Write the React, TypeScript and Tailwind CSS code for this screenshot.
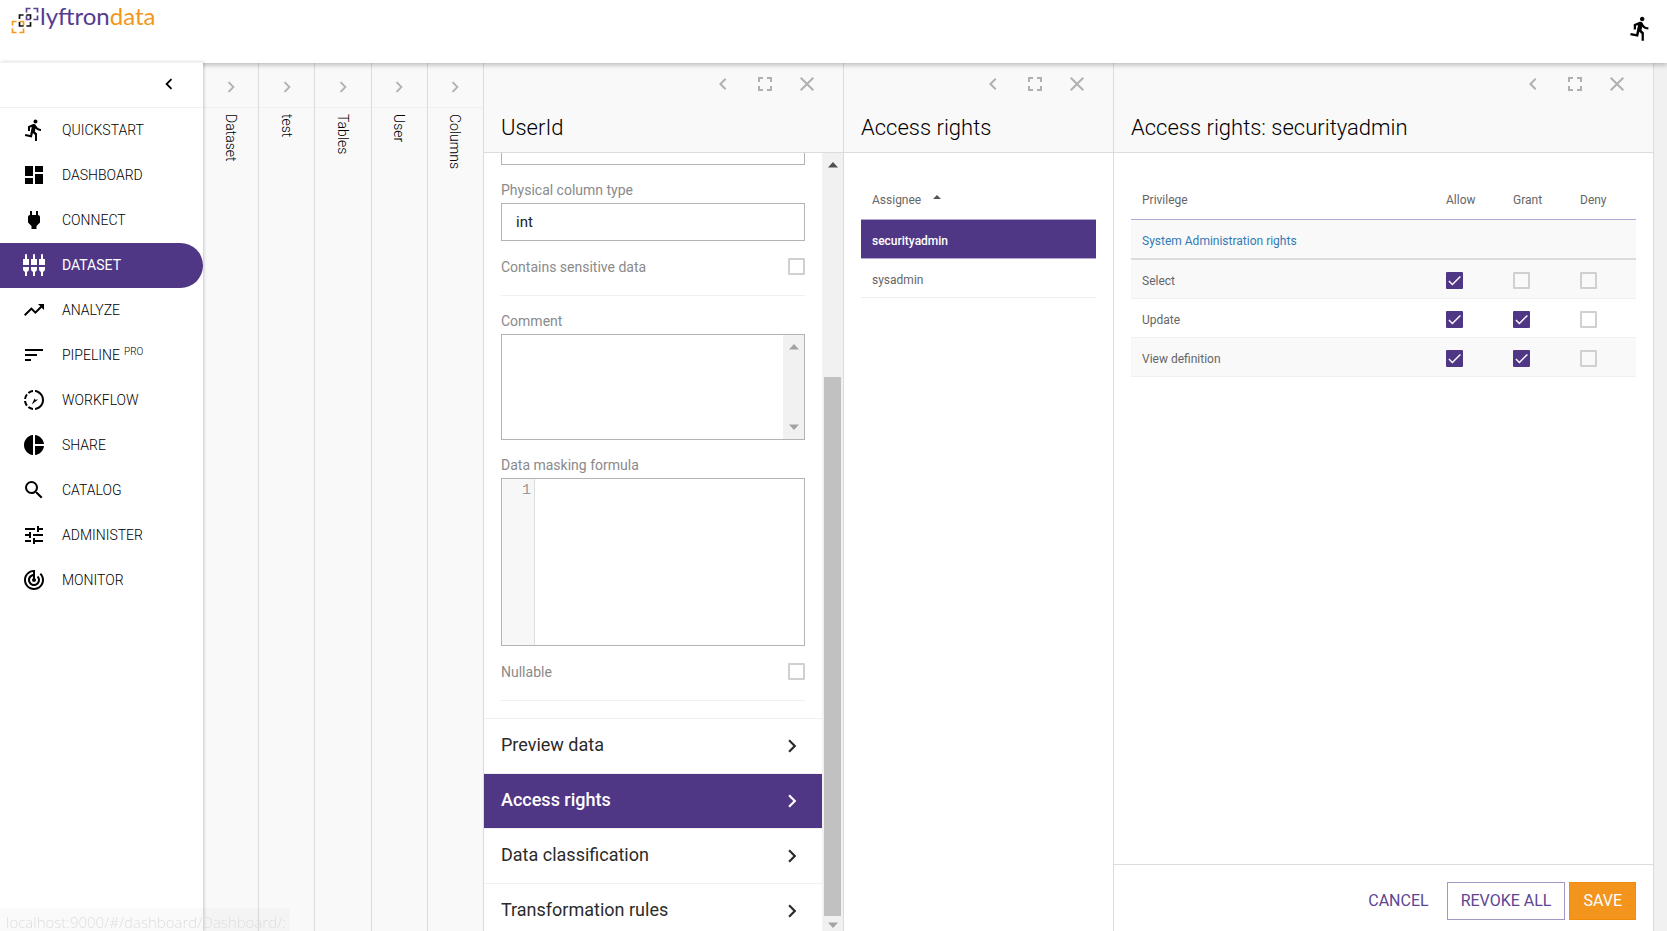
import { useState } from 'react';
import type { ReactNode } from 'react';
import {
    MdCheck,
    MdChevronLeft,
    MdChevronRight,
    MdClose,
    MdDashboard,
    MdDirectionsRun,
    MdFullscreen,
    MdPieChart,
    MdPower,
    MdSearch,
    MdSettingsInputComponent,
    MdSort,
    MdTrackChanges,
    MdTrendingUp,
    MdTune,
} from 'react-icons/md';

const WorkflowIcon = () => (
    <svg viewBox="0 0 24 24" className="w-6 h-6" fill="currentColor" aria-hidden="true">
        <path d="M11 4.07V2.05c-2.01.2-3.84 1-5.32 2.21L7.1 5.69A7.94 7.94 0 0 1 11 4.07zM5.69 7.1 4.26 5.68A9.95 9.95 0 0 0 2.05 11h2.02c.18-1.46.76-2.79 1.62-3.9zM4.07 13H2.05c.2 2.01 1 3.84 2.21 5.32l1.43-1.43A7.87 7.87 0 0 1 4.07 13zm1.61 6.74A9.98 9.98 0 0 0 11 21.95v-2.02a7.94 7.94 0 0 1-3.9-1.62l-1.42 1.43zM22 12c0 5.16-3.92 9.42-8.95 9.95v-2.02C16.97 19.41 20 16.05 20 12s-3.03-7.41-6.95-7.93V2.05C18.08 2.58 22 6.84 22 12z" />
        <path d="M9.800 16.500 12.500 10.500l.8 1.200 2.700-.2-2.400 2.100z" />
    </svg>
);

const navItems: { label: string; sup?: string; icon: ReactNode; active?: boolean }[] = [
    { label: 'QUICKSTART', icon: <MdDirectionsRun className="w-6 h-6" /> },
    { label: 'DASHBOARD', icon: <MdDashboard className="w-6 h-6" /> },
    { label: 'CONNECT', icon: <MdPower className="w-6 h-6" /> },
    { label: 'DATASET', icon: <MdSettingsInputComponent className="w-6 h-6" />, active: true },
    { label: 'ANALYZE', icon: <MdTrendingUp className="w-6 h-6" /> },
    { label: 'PIPELINE', sup: 'PRO', icon: <MdSort className="w-6 h-6" /> },
    { label: 'WORKFLOW', icon: <WorkflowIcon /> },
    { label: 'SHARE', icon: <MdPieChart className="w-6 h-6" /> },
    { label: 'CATALOG', icon: <MdSearch className="w-6 h-6" /> },
    { label: 'ADMINISTER', icon: <MdTune className="w-6 h-6" /> },
    { label: 'MONITOR', icon: <MdTrackChanges className="w-6 h-6" /> },
];

const strips = ['Dataset', 'test', 'Tables', 'User', 'Columns'];

const sections = ['Preview data', 'Access rights', 'Data classification', 'Transformation rules'];

const privileges = [
    { name: 'Select', rights: [true, false, false] },
    { name: 'Update', rights: [true, true, false] },
    { name: 'View definition', rights: [true, true, false] },
];

const rightNames = ['Allow', 'Grant', 'Deny'];

function Logo() {
    return (
        <a href="#" className="flex items-start gap-px" aria-label="lyftrondata">
            <svg width="28" height="27" viewBox="0 0 28 27" fill="none" strokeWidth="1.7" aria-hidden="true">
                <rect x="1.500" y="14.500" width="11" height="11" stroke="#f29a1f" strokeDasharray="8.2 2.8" strokeDashoffset="4.100" />
                <rect x="15.500" y="1.500" width="11" height="11" stroke="#5b4193" strokeDasharray="8.2 2.8" strokeDashoffset="4.100" />
                <rect x="8.500" y="8" width="11" height="11" stroke="#111" strokeDasharray="8.2 2.8" strokeDashoffset="4.100" />
            </svg>
            <span className="font-[Lato] text-2xl leading-[18px] text-[#553c8e]">
                lyftron<span className="text-[#f3961c]">data</span>
            </span>
        </a>
    );
}

function Checkbox({ label, defaultChecked }: { label: string; defaultChecked?: boolean }) {
    return (
        <span className="inline-grid">
            <input
                type="checkbox"
                aria-label={label}
                defaultChecked={defaultChecked}
                className="peer col-start-1 row-start-1 w-[17px] h-[17px] appearance-none rounded-[1px] border-2 border-[#d0d0d0] checked:border-[#503786] checked:bg-[#503786]"
            />
            <MdCheck className="col-start-1 row-start-1 w-[17px] h-[17px] text-white pointer-events-none invisible peer-checked:visible" />
        </span>
    );
}

function Panel({ title, className, children }: { title: string; className: string; children: ReactNode }) {
    return (
        <section className={'flex flex-col min-h-0 border-r border-[#dcdcdc] bg-white ' + className}>
            <header className="shrink-0 h-[90px] border-b border-[#dcdcdc] bg-[#f9f9f9] px-[17px]">
                <div className="flex justify-end gap-[18px] pt-[9px] pr-[7px] text-[#b0b0b0]">
                    <button aria-label="Collapse"><MdChevronLeft className="w-6 h-6" /></button>
                    <button aria-label="Full screen"><MdFullscreen className="w-6 h-6" /></button>
                    <button aria-label="Close"><MdClose className="w-6 h-6" /></button>
                </div>
                <h2 className="mt-4 text-[22px] leading-8 font-light text-black">{title}</h2>
            </header>
            {children}
        </section>
    );
}

const ArrowUp = ({ className }: { className?: string }) => (
    <svg width="10" height="6" viewBox="0 0 10 6" className={className} fill="currentColor" aria-hidden="true">
        <path d="M0 5.500 5 0l5 5.500z" />
    </svg>
);

const ArrowDown = ({ className }: { className?: string }) => (
    <svg width="10" height="6" viewBox="0 0 10 6" className={className} fill="currentColor" aria-hidden="true">
        <path d="M0 .5 5 6 10 .5z" />
    </svg>
);

function ColumnForm({ active, onSelect }: { active: string; onSelect: (s: string) => void }) {
    return (
        <div className="flex flex-1 min-h-0">
            <div className="flex-1 min-w-0 overflow-hidden">
                {/* the form is scrolled, so its first field is cut by the header */}
                <div className="-mt-[26px] px-[17px] pb-[17px] text-sm text-[#8a8a8a]">
                    <input aria-label="Column type" className="block w-full h-[38px] border border-[#b3b3b3]" />

                    <label htmlFor="physical" className="block mt-[15px] mb-[3px] leading-5">Physical column type</label>
                    <input id="physical" defaultValue="int" className="block w-full h-[38px] border border-[#b3b3b3] px-[14px] text-[15px] text-[#222]" />

                    <div className="flex items-center justify-between h-[55px] pb-[3px] border-b border-[#f0f0f0]">
                        <span>Contains sensitive data</span>
                        <Checkbox label="Contains sensitive data" />
                    </div>

                    <label htmlFor="comment" className="block mt-[15px] mb-[3px] leading-5">Comment</label>
                    <div className="flex h-[106px] border border-[#b3b3b3]">
                        <textarea id="comment" className="flex-1 resize-none px-3 py-2 text-[#222]" />
                        <div className="flex flex-col items-center justify-between w-[21px] py-[9px] bg-[#f1f1f1] text-[#a3a3a3]">
                            <ArrowUp />
                            <ArrowDown />
                        </div>
                    </div>

                    <label htmlFor="formula" className="block mt-[15px] mb-[3px] leading-5">Data masking formula</label>
                    <div className="flex h-[168px] border border-[#b3b3b3] font-['Liberation_Mono',monospace] text-[15px] leading-6">
                        <div className="w-[33px] border-r border-[#ddd] bg-[#f7f7f7] pr-[3px] text-right text-[#999]">1</div>
                        <textarea id="formula" className="flex-1 resize-none px-1 text-[#222]" />
                    </div>

                    <div className="flex items-center justify-between h-[55px] pb-[3px] border-b border-[#f0f0f0]">
                        <span>Nullable</span>
                        <Checkbox label="Nullable" />
                    </div>
                </div>

                {sections.map((s) => (
                    <button
                        key={s}
                        onClick={() => onSelect(s)}
                        className={
                            'flex items-center justify-between w-full h-[55px] border-t border-[#f0f0f0] px-[17px] pb-px text-lg ' +
                            (s === active ? 'bg-[#503786] font-medium text-white' : 'text-[#2b2b2b]')
                        }
                    >
                        <span className="pb-[2px]">{s}</span>
                        <MdChevronRight className="w-[26px] h-[26px]" />
                    </button>
                ))}
            </div>

            <div className="flex flex-col items-center w-[21px] shrink-0 bg-[#f1f1f1]">
                <ArrowUp className="mt-[9px] text-[#505050]" />
                <div className="mt-[209px] w-[17px] flex-1 bg-[#c1c1c1]" />
                <ArrowDown className="mt-[6px] mb-[3px] text-[#a3a3a3]" />
            </div>
        </div>
    );
}

export default function App() {
    const [section, setSection] = useState('Access rights');

    return (
        <div className="flex flex-col h-screen overflow-hidden bg-white font-[Roboto,sans-serif] text-black">
            <header className="relative z-10 flex justify-between shrink-0 h-[63px] bg-white pt-[7px] pl-[11px] pr-[13px] shadow-[0_2px_5px_rgba(0,0,0,0.26)]">
                <Logo />
                <button aria-label="Quickstart" className="self-start mt-2">
                    <MdDirectionsRun className="w-[27px] h-[27px]" />
                </button>
            </header>

            <div className="flex flex-1 min-h-0">
                <aside className="relative z-20 w-[203px] shrink-0 border-t border-[#f3f3f3] -mt-px bg-white shadow-[1px_0_3px_rgba(0,0,0,0.2)]">
                    <div className="flex items-center justify-end h-[45px] border-b border-[#f0f0f0] pr-[23px] pb-[2px]">
                        <button aria-label="Collapse menu"><MdChevronLeft className="w-[22px] h-[22px]" /></button>
                    </div>
                    <nav>
                        {navItems.map((item) => (
                            <a
                                key={item.label}
                                href="#"
                                className={
                                    'flex items-center gap-4 h-[45px] pl-[22px] pb-[2px] rounded-r-full text-sm ' +
                                    (item.active ? 'bg-[#503786] text-white' : 'font-light')
                                }
                            >
                                {item.icon}
                                <span>
                                    {item.label}
                                    {item.sup && <sup className="ml-1 text-[10px]">{item.sup}</sup>}
                                </span>
                            </a>
                        ))}
                    </nav>
                </aside>

                <div className="flex w-[281px] shrink-0">
                    {strips.map((name) => (
                        <div key={name} className="flex flex-col items-center flex-1 border-r border-[#dcdcdc] bg-[#f9f9f9]">
                            <button aria-label={'Expand ' + name} className="flex items-center justify-center w-full h-[45px] border-b border-[#f0f0f0] pt-[3px] text-[#b0b0b0]">
                                <MdChevronRight className="w-[22px] h-[22px]" />
                            </button>
                            <span className="mt-[6px] text-sm font-light [writing-mode:vertical-rl]">{name}</span>
                        </div>
                    ))}
                </div>

                <Panel title="UserId" className="w-[360px] shrink-0">
                    <ColumnForm active={section} onSelect={setSection} />
                </Panel>

                <Panel title="Access rights" className="w-[270px] shrink-0">
                    <div className="px-[17px] pt-7">
                        <table className="w-full border-separate border-spacing-0 text-left text-xs text-[#666]">
                            <thead>
                                <tr>
                                    <th className="h-[39px] border-b border-[#b3a8d0] px-[11px] font-normal">
                                        Assignee
                                        <svg width="8" height="4" viewBox="0 0 8 4" className="inline ml-3 mb-2" aria-hidden="true">
                                            <path d="M0 4 4 0l4 4z" fill="#555" />
                                        </svg>
                                    </th>
                                </tr>
                            </thead>
                            <tbody>
                                <tr>
                                    <td className="h-[39px] border-b border-[#b3a8d0] bg-[#503786] px-[11px] pt-[3px] font-medium text-white">securityadmin</td>
                                </tr>
                                <tr>
                                    <td className="h-[39px] border-b border-[#eee] px-[11px] pt-[3px]">sysadmin</td>
                                </tr>
                            </tbody>
                        </table>
                    </div>
                </Panel>

                <Panel title="Access rights: securityadmin" className="flex-1 min-w-0">
                    <div className="flex-1 px-[17px] pt-7">
                        <table className="w-full table-fixed border-separate border-spacing-0 text-left text-xs text-[#666]">
                            <thead>
                                <tr>
                                    <th className="h-[39px] border-b border-[#b3a8d0] px-[11px] font-normal">Privilege</th>
                                    {rightNames.map((r) => (
                                        <th key={r} className="w-[67px] border-b border-[#b3a8d0] pl-[11px] font-normal">{r}</th>
                                    ))}
                                </tr>
                            </thead>
                            <tbody>
                                <tr>
                                    <td colSpan={4} className="h-10 border-b-2 border-[#dcdcdc] bg-[#f9f9f9] px-[11px] pt-[3px]">
                                        <a href="#" className="text-[#337ab7]">System Administration rights</a>
                                    </td>
                                </tr>
                                {privileges.map((p) => (
                                    <tr key={p.name} className="odd:bg-white even:bg-[#f9f9f9]">
                                        <td className="h-[39px] border-b border-[#f0f0f0] px-[11px] pt-[3px]">{p.name}</td>
                                        {p.rights.map((on, i) => (
                                            <td key={i} className="border-b border-[#f0f0f0] pl-[11px] pt-[5px] leading-none">
                                                <Checkbox label={rightNames[i] + ' ' + p.name} defaultChecked={on} />
                                            </td>
                                        ))}
                                    </tr>
                                ))}
                            </tbody>
                        </table>
                    </div>
                    <footer className="flex items-center justify-end gap-1 shrink-0 h-[67px] border-t border-[#dcdcdc] px-[17px] pt-2 pb-[3px] text-base text-[#5d4692]">
                        <button className="h-[38px] px-[14px]">CANCEL</button>
                        <button className="h-[38px] border border-[#a598c6] px-[13px]">REVOKE ALL</button>
                        <button className="h-[38px] border border-[#f08c0a] bg-[#f3951c] px-[13px] text-white">SAVE</button>
                    </footer>
                </Panel>

                <div className="w-[13px] shrink-0 bg-[#f1f1f1]" />
            </div>

            <div className="fixed bottom-0 left-0 z-30 h-[23px] rounded-tr bg-black/2 pl-[6px] pr-1 font-['Open_Sans',sans-serif] text-[15px] leading-[28px] font-light text-[#ddd]">
                localhost:9000/#/dashboard/Dashboard/:
            </div>
        </div>
    );
}
